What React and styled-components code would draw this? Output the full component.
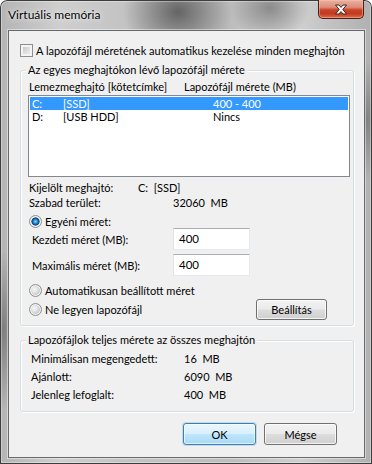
import React from "react";
import styled, { createGlobalStyle } from "styled-components";

const drives = [
  { letter: "C:", label: "[SSD]", size: "400 - 400", selected: true },
  { letter: "D:", label: "[USB HDD]", size: "Nincs" },
];

const totals = [
  ["Minimálisan megengedett:", "16  MB"],
  ["Ajánlott:", "6090  MB"],
  ["Jelenleg lefoglalt:", "400  MB"],
];

export default function App() {
  return (
    <>
      <GlobalStyle />
      <Window>
        <TitleBar>
          <Title>Virtuális memória</Title>
          <CloseButton>
            <svg width="14" height="11" viewBox="0 0 14 11">
              <path
                d="M1.5 1 H5 L7 3.4 L9 1 H12.5 L8.8 5.5 L12.5 10 H9 L7 7.6 L5 10 H1.5 L5.2 5.5 Z"
                fill="#fff"
                stroke="#3a2620"
                strokeWidth="1"
                strokeLinejoin="round"
              />
            </svg>
          </CloseButton>
        </TitleBar>

        <Client>
          <CheckRow>
            <CheckBox />
            <span>A lapozófájl méretének automatikus kezelése minden meghajtón</span>
          </CheckRow>

          <GroupBox $top={13} $bottom={5}>
            <Legend>Az egyes meghajtókon lévő lapozófájl mérete</Legend>
            <ListHeader>
              <span>Lemezmeghajtó [kötetcímke]</span>
              <span>Lapozófájl mérete (MB)</span>
            </ListHeader>
            <ListBox>
              {drives.map((d) => (
                <ListRow key={d.letter} $selected={d.selected}>
                  <span>{d.letter}</span>
                  <span>{d.label}</span>
                  <span>{d.size}</span>
                </ListRow>
              ))}
            </ListBox>

            <InfoRow $labelWidth={109} $top={3}>
              <span>Kijelölt meghajtó:</span>
              <Value>C:  [SSD]</Value>
            </InfoRow>
            <InfoRow $labelWidth={144}>
              <span>Szabad terület:</span>
              <Value>32060  MB</Value>
            </InfoRow>

            <RadioRow $top={5}>
              <Radio $checked />
              <span>Egyéni méret:</span>
            </RadioRow>
            <FieldRow $top={0}>
              <FieldLabel>Kezdeti méret (MB):</FieldLabel>
              <TextBox>400</TextBox>
            </FieldRow>
            <FieldRow $top={4}>
              <FieldLabel>Maximális méret (MB):</FieldLabel>
              <TextBox>400</TextBox>
            </FieldRow>

            <RadioRow $top={8}>
              <Radio />
              <span>Automatikusan beállított méret</span>
            </RadioRow>
            <ActionRow>
              <Radio />
              <RadioText>Ne legyen lapozófájl</RadioText>
              <Button $width={71} $height={21}>Beállítás</Button>
            </ActionRow>
          </GroupBox>

          <GroupBox $top={14} $bottom={7}>
            <Legend>Lapozófájlok teljes mérete az összes meghajtón</Legend>
            <Totals>
              {totals.map(([label, value]) => (
                <TotalRow key={label}>
                  <span>{label}</span>
                  <Value>{value}</Value>
                </TotalRow>
              ))}
            </Totals>
          </GroupBox>

          <ButtonRow>
            <Button $width={73} $height={22} $default>OK</Button>
            <Button $width={73} $height={22}>Mégse</Button>
          </ButtonRow>
        </Client>
      </Window>
    </>
  );
}

// ---------- styles ----------
const GlobalStyle = createGlobalStyle`
  html, body {
    margin: 0;
    padding: 0;
    background: #ffffff;
  }
  body {
    font-family: "Segoe UI", Lato, "Liberation Sans", sans-serif;
    font-size: 11px;
    color: #000;
  }
  * { box-sizing: border-box; }
`;

const Window = styled.div`
  width: 372px;
  height: 464px;
  display: flex;
  flex-direction: column;
  border-radius: 7px 7px 0 0;
  overflow: hidden;
  box-shadow: inset 0 0 0 1px #3d3d3d, inset 0 0 0 2px rgba(255, 255, 255, 0.35);
  background:
    radial-gradient(ellipse 55px 45px at 178px 12px, rgba(70, 70, 70, 0.75), transparent),
    radial-gradient(ellipse 40px 30px at 270px 8px, rgba(90, 90, 90, 0.55), transparent),
    radial-gradient(ellipse 30px 60px at 365px 120px, rgba(80, 80, 80, 0.5), transparent),
    radial-gradient(ellipse 20px 80px at 3px 330px, rgba(70, 70, 70, 0.5), transparent),
    linear-gradient(90deg, #b4b4b4 0, #cfcfcf 60px, #c4c4c4 120px, #bdbdbd 230px, #cfcfcf 300px, #b0b0b0 372px);
`;

const TitleBar = styled.div`
  height: 30px;
  flex: none;
  display: flex;
  justify-content: space-between;
  align-items: flex-start;
  padding: 0 8px 0 8px;
`;

const Title = styled.div`
  line-height: 30px;
  font-size: 12px;
  color: #000;
  text-shadow: 0 0 6px rgba(255, 255, 255, 0.9), 0 0 2px rgba(255, 255, 255, 0.8);
`;

const CloseButton = styled.div`
  width: 46px;
  height: 19px;
  display: flex;
  align-items: center;
  justify-content: center;
  border: 1px solid #4a1e14;
  border-top: none;
  border-radius: 0 0 5px 5px;
  background: linear-gradient(180deg, #eab0a2 0, #dc8e7a 40%, #c9442a 55%, #c3391f 75%, #dc6c4a 100%);
  box-shadow: inset 0 0 0 1px rgba(255, 200, 180, 0.45);
`;

const Client = styled.div`
  height: 428px;
  margin: 0 7px 0 8px;
  border: 1px solid #666a6e;
  background: #f0f0f0;
  display: flex;
  flex-direction: column;
  align-items: flex-start;
  padding-left: 11px;
  box-shadow: 0 0 0 1px rgba(255, 255, 255, 0.45);
`;

const CheckRow = styled.div`
  margin-top: 13px;
  height: 13px;
  display: flex;
  align-items: center;
  gap: 3px;
  line-height: 13px;
`;

const CheckBox = styled.span`
  width: 13px;
  height: 13px;
  flex: none;
  border: 1px solid #8e8f8f;
  background: linear-gradient(135deg, #b9bcc0 0, #dfe0e1 55%, #f3f3f3 100%);
  box-shadow: inset 0 0 0 2px #f4f4f4;
`;

const GroupBox = styled.div`
  margin-top: ${(p) => p.$top}px;
  width: 334px;
  border: 1px solid #d5dfe5;
  border-radius: 3px;
  box-shadow: inset 1px 1px 0 #fff, 1px 1px 0 #fff;
  padding-bottom: ${(p) => p.$bottom}px;
`;

const Legend = styled.div`
  width: fit-content;
  height: 14px;
  line-height: 14px;
  margin: -8px 0 0 5px;
  padding: 0 2px;
  background: #f0f0f0;
`;

const ListHeader = styled.div`
  margin-top: 3px;
  padding-left: 8px;
  display: grid;
  grid-template-columns: 155px auto;
  line-height: 14px;
`;

const ListBox = styled.div`
  margin: 1px 0 0 7px;
  width: 322px;
  height: 82px;
  border: 1px solid #828790;
  background: #fff;
  padding: 1px;
`;

const ListRow = styled.div`
  height: 13px;
  line-height: 13px;
  padding-left: 2px;
  display: grid;
  grid-template-columns: 31px 150px auto;
  background: ${(p) => (p.$selected ? "#3399ff" : "transparent")};
  color: ${(p) => (p.$selected ? "#fff" : "#000")};
`;

const InfoRow = styled.div`
  margin-top: ${(p) => p.$top || 0}px;
  padding-left: 8px;
  height: 15px;
  line-height: 15px;
  display: grid;
  grid-template-columns: ${(p) => p.$labelWidth}px auto;
`;

const Value = styled.span`
  white-space: pre;
`;

const RadioRow = styled.div`
  margin-top: ${(p) => p.$top}px;
  padding-left: 8px;
  height: 13px;
  display: flex;
  align-items: center;
  gap: 3px;
  line-height: 13px;
`;

const Radio = styled.span`
  width: 13px;
  height: 13px;
  flex: none;
  border-radius: 50%;
  border: 1px solid #8e8f8f;
  background: ${(p) =>
    p.$checked
      ? "radial-gradient(circle at 50% 50%, #8fdcff 0, #2e9be0 1.6px, #0f5fa8 3px, #1b3f66 3.8px, #dadcdf 4.4px, #eceeef 5.5px)"
      : "radial-gradient(circle at 40% 40%, #f8f8f8 0, #e2e3e5 3px, #c9cbce 5.5px)"};
  box-shadow: inset 0 0 0 1px #f4f4f4;
`;

const RadioText = styled.span`
  flex: 1;
  line-height: 13px;
`;

const FieldRow = styled.div`
  margin-top: ${(p) => p.$top}px;
  padding-left: 11px;
  height: 22px;
  display: flex;
  align-items: center;
`;

const FieldLabel = styled.span`
  width: 141px;
  flex: none;
`;

const TextBox = styled.div`
  width: 77px;
  height: 22px;
  line-height: 20px;
  padding-left: 5px;
  font-size: 11.5px;
  background: #fff;
  border: 1px solid #dbdfe6;
  border-top-color: #abadb3;
  border-left-color: #e2e3ea;
  border-right-color: #e3e9ef;
  border-bottom-color: #e3e9ef;
`;

const ActionRow = styled.div`
  margin-top: 2px;
  padding: 0 26px 0 8px;
  height: 21px;
  display: flex;
  align-items: center;
  gap: 3px;
`;

const Button = styled.div`
  width: ${(p) => p.$width}px;
  height: ${(p) => p.$height}px;
  flex: none;
  display: flex;
  align-items: center;
  justify-content: center;
  border-radius: 3px;
  border: 1px solid ${(p) => (p.$default ? "#3c7fb1" : "#707070")};
  background: ${(p) =>
    p.$default
      ? "linear-gradient(180deg, #eaf6fd 0, #d9f0fc 48%, #bee6fd 52%, #a7d9f5 100%)"
      : "linear-gradient(180deg, #f2f2f2 0, #ebebeb 48%, #dddddd 52%, #cfcfcf 100%)"};
  box-shadow: ${(p) =>
    p.$default
      ? "inset 0 0 0 1px rgba(255,255,255,0.6), 0 0 0 1px rgba(60,150,220,0.25)"
      : "inset 0 0 0 1px rgba(255,255,255,0.75)"};
`;

const Totals = styled.div`
  margin-top: 3px;
  padding-left: 10px;
`;

const TotalRow = styled.div`
  height: 18px;
  line-height: 18px;
  display: grid;
  grid-template-columns: 153px auto;
`;

const ButtonRow = styled.div`
  margin-top: 11px;
  align-self: stretch;
  display: flex;
  justify-content: flex-end;
  gap: 8px;
  padding-right: 27px;
`;
